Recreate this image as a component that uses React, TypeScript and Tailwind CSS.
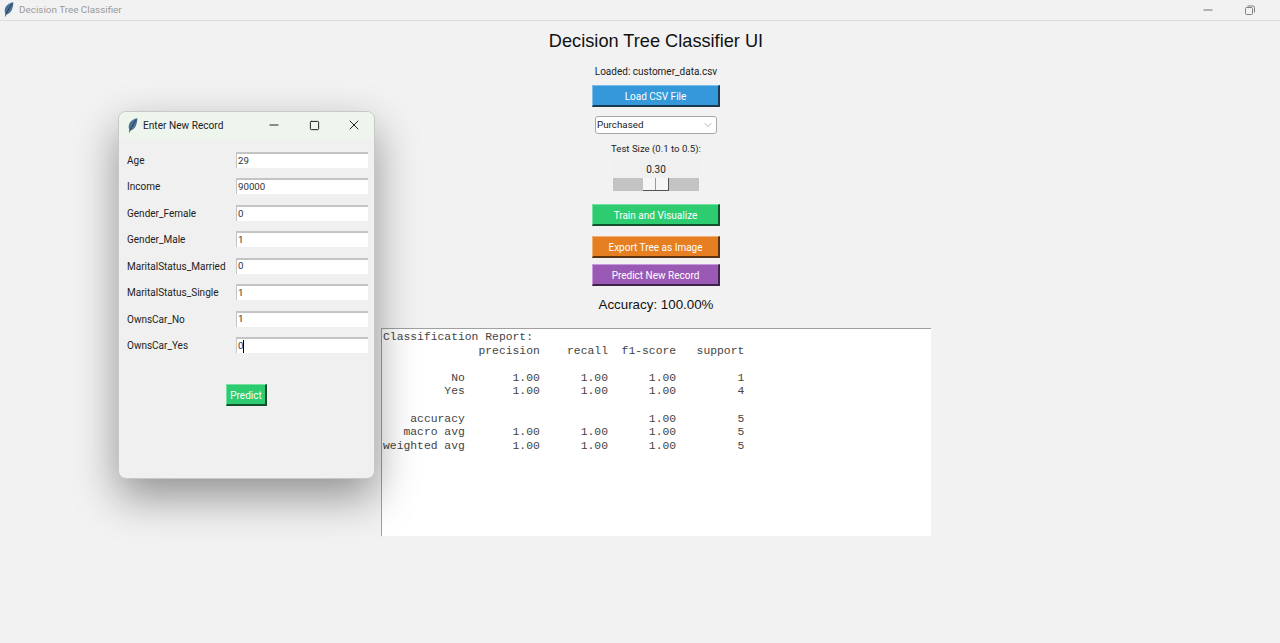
import { ChevronDown, Minus, Square, X } from "lucide-react";

const uiFont = "font-['Roboto','Noto_Sans',sans-serif]";

const fields = [
  { label: "Age", value: "29" },
  { label: "Income", value: "90000" },
  { label: "Gender_Female", value: "0" },
  { label: "Gender_Male", value: "1" },
  { label: "MaritalStatus_Married", value: "0" },
  { label: "MaritalStatus_Single", value: "1" },
  { label: "OwnsCar_No", value: "1" },
  { label: "OwnsCar_Yes", value: "0" },
];

const report = `Classification Report:
              precision    recall  f1-score   support

          No       1.00      1.00      1.00         1
         Yes       1.00      1.00      1.00         4

    accuracy                           1.00         5
   macro avg       1.00      1.00      1.00         5
weighted avg       1.00      1.00      1.00         5`;

// tk feather icon
function Feather() {
  return (
    <svg width="10" height="15" viewBox="0 0 10 15">
      <path d="M9.4 0.3C5.2 0.8 1.8 3.4 0.9 7.2C0.5 9 0.7 10.4 1.3 11.4L0.8 14.4L1.7 14.6L2.5 12.4C5.2 12 7.2 9.8 8.2 7C9 4.8 9.3 2.6 9.4 0.3Z" fill="#4a7196" />
      <path d="M8.4 1.6C6 4.6 3.7 8.4 2.2 12.4" stroke="#1d2f44" strokeWidth="0.8" fill="none" />
    </svg>
  );
}

function TkButton({ label, color, edge, className }: { label: string; color: string; edge: string; className: string }) {
  return (
    <button className={`${color} ${edge} ${className} border-b-2 border-r-2 border-t border-l pt-[1px] text-white text-[10px] flex items-center justify-center`}>
      {label}
    </button>
  );
}

export default function App() {
  return (
    <div className={`relative h-[643px] w-[1280px] overflow-hidden bg-[#f2f2f2] ${uiFont}`}>
      {/* main window title bar */}
      <div className="flex h-[21px] items-center justify-between border-b border-[#dcdcdc] pl-[4px] pr-[25px]">
        <div className="flex items-center gap-[5px]">
          <Feather />
          <span className="pt-[1px] text-[9.9px] text-[#9a9a9a]">Decision Tree Classifier</span>
        </div>
        <div className="flex items-center gap-[30px] text-[#707070]">
          <Minus size={14} strokeWidth={1} absoluteStrokeWidth />
          <svg width="10" height="10" viewBox="0 0 10 10" fill="none" stroke="#808080" strokeWidth="1">
            <rect x="0.5" y="2.5" width="7" height="7" rx="1" />
            <path d="M2.5 1H8A1.5 1.5 0 0 1 9.5 2.5V7.5" />
          </svg>
        </div>
      </div>

      {/* main content */}
      <div className="flex flex-col items-center pl-[32px]">
        <h1 className="mt-[8px] h-[24px] font-['Liberation_Sans',sans-serif] text-[18.2px] leading-[24px] text-[#111]">
          Decision Tree Classifier UI
        </h1>
        <p className="mt-[12px] h-[14px] text-[10px] leading-[14px] text-[#222]">Loaded: customer_data.csv</p>
        <TkButton label="Load CSV File" color="bg-[#3498db]" edge="border-t-[#7cbcea] border-l-[#7cbcea] border-b-[#1b3a50] border-r-[#1b3a50]" className="mt-[6px] h-[22px] w-[128px]" />
        <div className="mt-[9px] flex h-[18px] w-[122px] items-center justify-between rounded-[3px] border border-[#a8a8a8] bg-white pl-[1px] pr-[2px]">
          <span className="text-[9.8px] text-[#222]">Purchased</span>
          <ChevronDown size={12} strokeWidth={1} className="text-[#666]" />
        </div>
        <p className="mt-[8px] h-[14px] text-[9.6px] leading-[14px] text-[#222]">Test Size (0.1 to 0.5):</p>
        <div className="mt-[4px] flex h-[33px] w-[86px] flex-col items-center bg-[#f0f0f0]">
          <span className="mt-[3px] h-[14px] text-[10px] leading-[14px] text-[#222]">0.30</span>
          <div className="mt-[1px] flex h-[13px] w-full items-start bg-[#c3c3c3] pl-[30px]">
            <div className="flex h-[13px] w-[26px] border-b border-r border-[#555] bg-[#f6f6f6]">
              <div className="h-full w-[13px] border-r border-[#999]" />
            </div>
          </div>
        </div>
        <TkButton label="Train and Visualize" color="bg-[#2ecc71]" edge="border-t-[#76e0a3] border-l-[#76e0a3] border-b-[#14502e] border-r-[#14502e]" className="mt-[11px] h-[22px] w-[128px]" />
        <TkButton label="Export Tree as Image" color="bg-[#e67e22]" edge="border-t-[#f0ae75] border-l-[#f0ae75] border-b-[#5c330e] border-r-[#5c330e]" className="mt-[10px] h-[22px] w-[128px]" />
        <TkButton label="Predict New Record" color="bg-[#9b59b6]" edge="border-t-[#c79ad9] border-l-[#c79ad9] border-b-[#3f2449] border-r-[#3f2449]" className="mt-[6px] h-[22px] w-[128px]" />
        <p className="mt-[10px] h-[18px] font-['Liberation_Sans',sans-serif] text-[13.35px] leading-[18px] text-[#111]">Accuracy: 100.00%</p>
        <pre className="mt-[14px] h-[208px] w-[550px] border-l border-t border-[#a0a0a0] bg-white pl-[1px] pt-[2px] font-['Liberation_Mono',monospace] text-[11.37px] leading-[13.6px] text-[#444]">
          {report}
        </pre>
      </div>

      {/* dialog window */}
      <div className="absolute left-[118px] top-[111px] flex h-[368px] w-[257px] flex-col overflow-hidden rounded-[8px] border border-[#c8c8c8] bg-[#f0f0f0] shadow-[0_18px_44px_rgba(0,0,0,0.4)]">
        <div className="flex h-[26px] items-center bg-[#eef5ec] pl-[9px]">
          <Feather />
          <span className="ml-[5px] pt-[1px] text-[10.15px] text-[#222]">Enter New Record</span>
          <div className="ml-auto flex items-center text-[#222]">
            <div className="flex w-[40px] justify-center">
              <Minus size={14} strokeWidth={1} absoluteStrokeWidth />
            </div>
            <div className="flex w-[40px] justify-center">
              <Square size={11} strokeWidth={1} absoluteStrokeWidth />
            </div>
            <div className="flex w-[40px] justify-center">
              <X size={16} strokeWidth={1} absoluteStrokeWidth />
            </div>
          </div>
        </div>
        <div className="mt-[14px] flex flex-col gap-[10.45px] pl-[8px]">
          {fields.map((f, i) => (
            <div key={f.label} className="flex h-[16px] items-center">
              <span className="w-[109px] whitespace-nowrap pt-[1px] text-[10px] text-[#222]">{f.label}</span>
              <div className="flex h-[16px] w-[132px] items-center border-l border-t-2 border-[#c4c4c4] bg-white pl-[1px] text-[9.7px] text-[#333]">
                {f.value}
                {i === fields.length - 1 && <span className="h-[13px] w-[1px] bg-black" />}
              </div>
            </div>
          ))}
        </div>
        <div className="mt-[31px] flex justify-center">
          <TkButton label="Predict" color="bg-[#2ecc71]" edge="border-t-[#76e0a3] border-l-[#76e0a3] border-b-[#14502e] border-r-[#14502e]" className="h-[22px] w-[41px]" />
        </div>
      </div>
    </div>
  );
}
